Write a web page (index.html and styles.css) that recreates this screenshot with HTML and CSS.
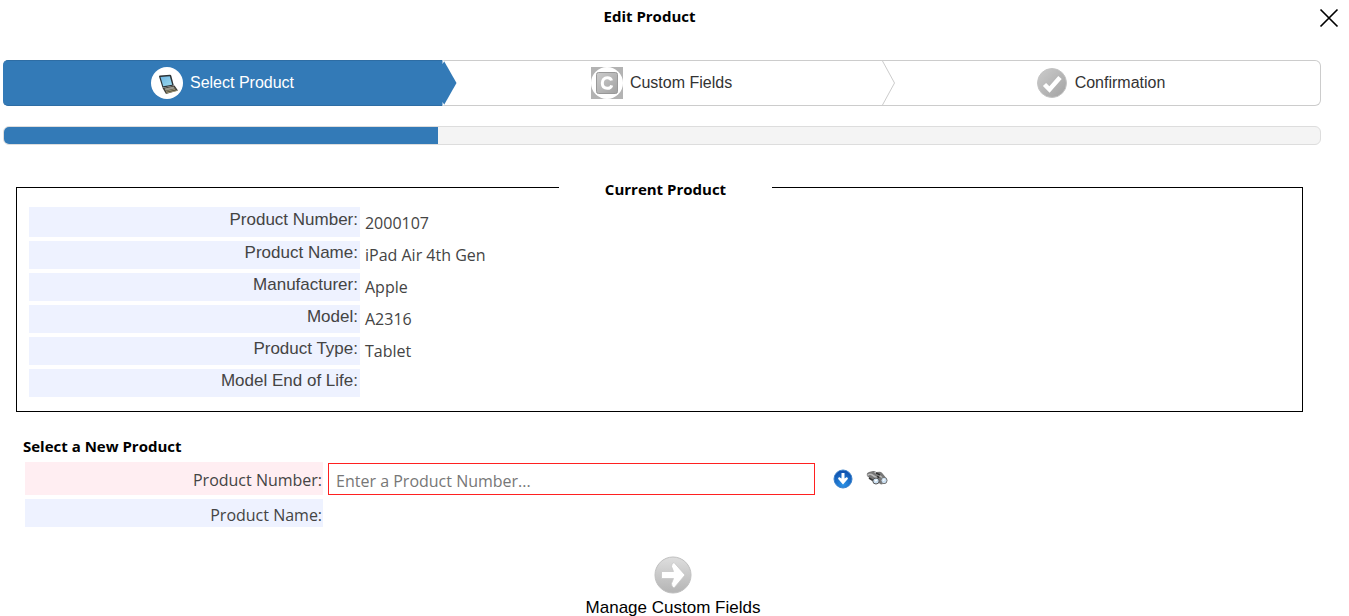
FILE: index.html
```html
<!DOCTYPE html>
<html lang="en">
<head>
	<meta charset="utf-8">
	<title>Edit Product</title>
	<link rel="stylesheet" href="styles.css">
</head>
<body>
	<header class="titlebar">
		<h1>Edit Product</h1>
		<button type="button" class="close" aria-label="Close">
			<svg width="20" height="20" viewBox="0 0 20 20"><path d="M1.500 1.500L18.500 18.500M18.500 1.500L1.500 18.500" stroke="#000" stroke-width="1.700"/></svg>
		</button>
	</header>

	<ol class="wizard">
		<li class="step active">
			<a href="#product">
				<svg width="32" height="32" viewBox="0 0 32 32">
					<defs>
						<linearGradient id="screen" x1="0" y1="0" x2="1" y2="1"><stop offset="0" stop-color="#6fb4e0"/><stop offset="1" stop-color="#9bdcf0"/></linearGradient>
					</defs>
					<circle cx="16" cy="16" r="16" fill="#fff"/>
					<path d="M11.500 21L23.500 18.500L27 23.500L15 27Z" fill="#3d3c35"/>
					<path d="M13.500 21.500L22.500 19.600L24 21.500L14.500 23.800Z" fill="#9a988c"/>
					<path d="M15 24.500L24.500 22.200M15.200 26L26 23.600" stroke="#b5a982" stroke-width=".8"/>
					<path d="M8 9.500Q8 8.500 9 8.500L19 7.800Q20 7.800 20.300 8.800L22.800 18.600L11.500 20.800Z" fill="#2c3236"/>
					<path d="M9.500 10L18.800 9.200L21.200 17.700L12.200 19.300Z" fill="url(#screen)"/>
				</svg>
				<span>Select Product</span>
			</a>
			<svg class="arrow" width="15" height="46" viewBox="0 0 15 46"><path d="M0 0V46L2 45L14.500 23L2 1Z" fill="#337ab7"/><path d="M.5 0V4L2.500 1ZM.5 46V42L2.500 45Z" fill="#fff"/></svg>
		</li>
		<li class="step">
			<a href="#fields">
				<svg width="32" height="32" viewBox="0 0 32 32">
					<defs>
						<linearGradient id="grey" x1="0" y1="0" x2="1" y2="1"><stop offset="0" stop-color="#ccc"/><stop offset="1" stop-color="#a2a2a2"/></linearGradient>
					</defs>
					<rect width="32" height="32" fill="#b3b3b3"/>
					<circle cx="16" cy="16" r="16" fill="#fff"/>
					<rect x="5.500" y="5.500" width="21" height="21" rx="2" fill="url(#grey)" stroke="#999"/>
					<path d="M20.500 13.500C20 11.500 18.300 10.700 16.300 10.700C13.200 10.700 11.300 12.900 11.300 16C11.300 19.200 13.200 21.300 16.300 21.300C18.500 21.300 20.200 20.300 20.700 18.300" fill="none" stroke="#fff" stroke-width="3"/>
				</svg>
				<span>Custom Fields</span>
			</a>
			<svg class="arrow" width="15" height="46" viewBox="0 0 15 46"><path d="M0 1H2L14 23L2 45H0Z" fill="#fff"/><path d="M1.500 1L13.500 23L1.500 45" fill="none" stroke="#ccc"/></svg>
		</li>
		<li class="step">
			<a href="#confirm">
				<svg width="32" height="32" viewBox="0 0 32 32">
					<circle cx="16" cy="16" r="14.500" fill="url(#grey)" stroke="#c4c4c4"/>
					<path d="M8.500 17.500L13.500 22.500L24 10.500" fill="none" stroke="#fff" stroke-width="4.500"/>
				</svg>
				<span>Confirmation</span>
			</a>
		</li>
	</ol>

	<div class="progress"><div class="bar"></div></div>

	<fieldset class="current">
		<legend>Current Product</legend>
		<table>
			<tr><th scope="row">Product Number:</th><td>2000107</td></tr>
			<tr><th scope="row">Product Name:</th><td>iPad Air 4th Gen</td></tr>
			<tr><th scope="row">Manufacturer:</th><td>Apple</td></tr>
			<tr><th scope="row">Model:</th><td>A2316</td></tr>
			<tr><th scope="row">Product Type:</th><td>Tablet</td></tr>
			<tr><th scope="row">Model End of Life:</th><td></td></tr>
		</table>
	</fieldset>

	<form>
		<h2>Select a New Product</h2>
		<div class="row">
			<label class="label required" for="number">Product Number:</label>
			<div class="field">
				<input type="text" id="number" placeholder="Enter a Product Number...">
				<button type="button" class="icon" aria-label="Show list">
					<svg width="20" height="20" viewBox="0 0 20 20">
						<defs>
							<radialGradient id="blue" cx=".5" cy=".8" r=".8"><stop offset="0" stop-color="#2b93e8"/><stop offset="1" stop-color="#0d4ba8"/></radialGradient>
						</defs>
						<circle cx="10" cy="10" r="9" fill="url(#blue)" stroke="#3d83cc"/>
						<path d="M8.500 4H11.500V9.500L14 8L15 9.800L10 15.500L5 9.800L6 8L8.500 9.500Z" fill="#fff"/>
					</svg>
				</button>
				<button type="button" class="icon" aria-label="Search">
					<svg width="22" height="20" viewBox="0 0 22 20">
						<path d="M1 7Q0 4 3 3L7 2Q9 1.500 10 3L14 2.800Q16 3 17 5L21 10Q22 13 19 14.500L15 15.500L10 12L7 12Z" fill="#777"/>
						<path d="M1.500 6.500Q3 4.500 5.500 5.500L11 9M8.500 3L16 8.500" fill="none" stroke="#bbb" stroke-width="1.500"/>
						<path d="M10 4L14 6M3 9L7 11.500M11.500 7L13 9" stroke="#333" stroke-width="1.500"/>
						<ellipse cx="10" cy="12" rx="3.200" ry="3" fill="#c9def0" stroke="#555"/>
						<ellipse cx="18" cy="11.500" rx="3" ry="3.200" fill="#c9def0" stroke="#777"/>
						<path d="M9 12L11 11M17 11.500L18.500 10.500" stroke="#fff" stroke-width="1.500"/>
					</svg>
				</button>
			</div>
		</div>
		<div class="row">
			<div class="label">Product Name:</div>
		</div>
		<button type="button" class="next">
			<svg width="38" height="38" viewBox="0 0 38 38">
				<defs>
					<linearGradient id="pale" x1="0" y1="0" x2="0" y2="1"><stop offset="0" stop-color="#dedede"/><stop offset="1" stop-color="#b4b4b4"/></linearGradient>
				</defs>
				<circle cx="19" cy="19" r="18" fill="url(#pale)" stroke="#c0c0c0"/>
				<path d="M7.500 15.500H19.500L17.500 10.500Q17.300 7.500 20 6.500L31 19L20 32Q17.300 30.500 17.500 27.500L19.500 22.500H7.500Z" fill="#fff" stroke="#c6c6c6" stroke-width=".8"/>
			</svg>
			<span>Manage Custom Fields</span>
		</button>
	</form>
</body>
</html>
```
FILE: styles.css
```css
* {
	box-sizing: border-box;
}
body {
	margin: 0;
	font-family: "Open Sans", "Noto Sans", sans-serif;
	font-size: 16px;
	color: #444;
	background-color: #fff;
}
button {
	padding: 0;
	border: 0;
	background: none;
	cursor: pointer;
}
svg {
	display: block;
	flex: none;
}
h1, h2, legend {
	margin: 0;
	font-size: 15px;
	line-height: 20px;
	font-weight: 700;
	color: #000;
}

.titlebar {
	display: flex;
	align-items: flex-start;
	height: 60px;
	padding-top: 6px;
}
.titlebar h1 {
	flex: 1;
	text-align: center;
}
.close {
	width: 50px;
	padding: 2px 10px 0 20px;
}

/* steps */
.wizard {
	display: flex;
	height: 46px;
	margin: 0 28px 0 3px;
	padding: 0;
	list-style: none;
	font-family: "Liberation Sans", Arial, sans-serif;
}
.step {
	position: relative;
	flex: 1;
	border: 1px solid #ccc;
	border-width: 1px 0;
}
.step:first-child {
	border-radius: 5px 0 0 5px;
}
.step:last-child {
	border-right-width: 1px;
	border-radius: 0 6px 6px 0;
}
.step a {
	display: flex;
	align-items: center;
	justify-content: center;
	gap: 7px;
	height: 44px;
	color: #333;
	text-decoration: none;
}
.step.active {
	background-color: #337ab7;
	border-color: #2e6da4;
}
.step.active a {
	color: #fff;
}
.arrow {
	position: absolute;
	top: -1px;
	left: 100%;
	z-index: 1;
}

.progress {
	height: 19px;
	margin: 20px 28px 0 3px;
	border: 1px solid #ddd;
	border-radius: 6px;
	background-color: #f4f4f4;
	overflow: hidden;
}
.bar {
	width: 33%;
	height: 100%;
	background-color: #337ab7;
}

/* current product */
.current {
	margin: 30px 46px 0 16px;
	padding: 8px 0 10px 12px;
	border: 1px solid #000;
}
.current legend {
	width: 213px;
	margin: 0 auto;
	padding: 4px 0 0;
	text-align: center;
}
.current table {
	width: 100%;
	border-collapse: collapse;
}
.current th {
	width: 26%;
	height: 32px;
	padding: 0 2px 4px 0;
	border-bottom: 4px solid #fff;
	background-color: #eef2ff;
	font-family: "Liberation Sans", Arial, sans-serif;
	font-size: 17px;
	line-height: 20px;
	font-weight: 400;
	text-align: right;
}
.current td {
	padding: 0 0 0 5px;
	line-height: 20px;
}

/* new product */
form {
	display: flex;
	flex-direction: column;
	margin: 24px 28px 0 25px;
}
form h2 {
	margin: 0 0 6px -2px;
}
.row {
	display: grid;
	grid-template-columns: 23% 1fr;
	gap: 5px;
	margin-bottom: 4px;
}
.label {
	padding: 4px 1px 0 0;
	line-height: 24px;
	text-align: right;
	background-color: #eef2ff;
}
.required {
	padding: 6px 1px 3px 0;
	background-color: #ffeef2;
}
.field {
	display: flex;
	align-items: center;
}
.field input {
	width: 49%;
	height: 32px;
	margin-right: 5px;
	padding: 4px 7px 0;
	border: 1px solid #ff2020;
	font: inherit;
	color: #444;
}
.field input::placeholder {
	color: #777;
}
.icon {
	margin-left: 13px;
}
.next {
	display: flex;
	flex-direction: column;
	align-items: center;
	align-self: center;
	gap: 4px;
	margin-top: 25px;
	font-family: "Liberation Sans", Arial, sans-serif;
	font-size: 17px;
	line-height: 20px;
	color: #000;
}
```
